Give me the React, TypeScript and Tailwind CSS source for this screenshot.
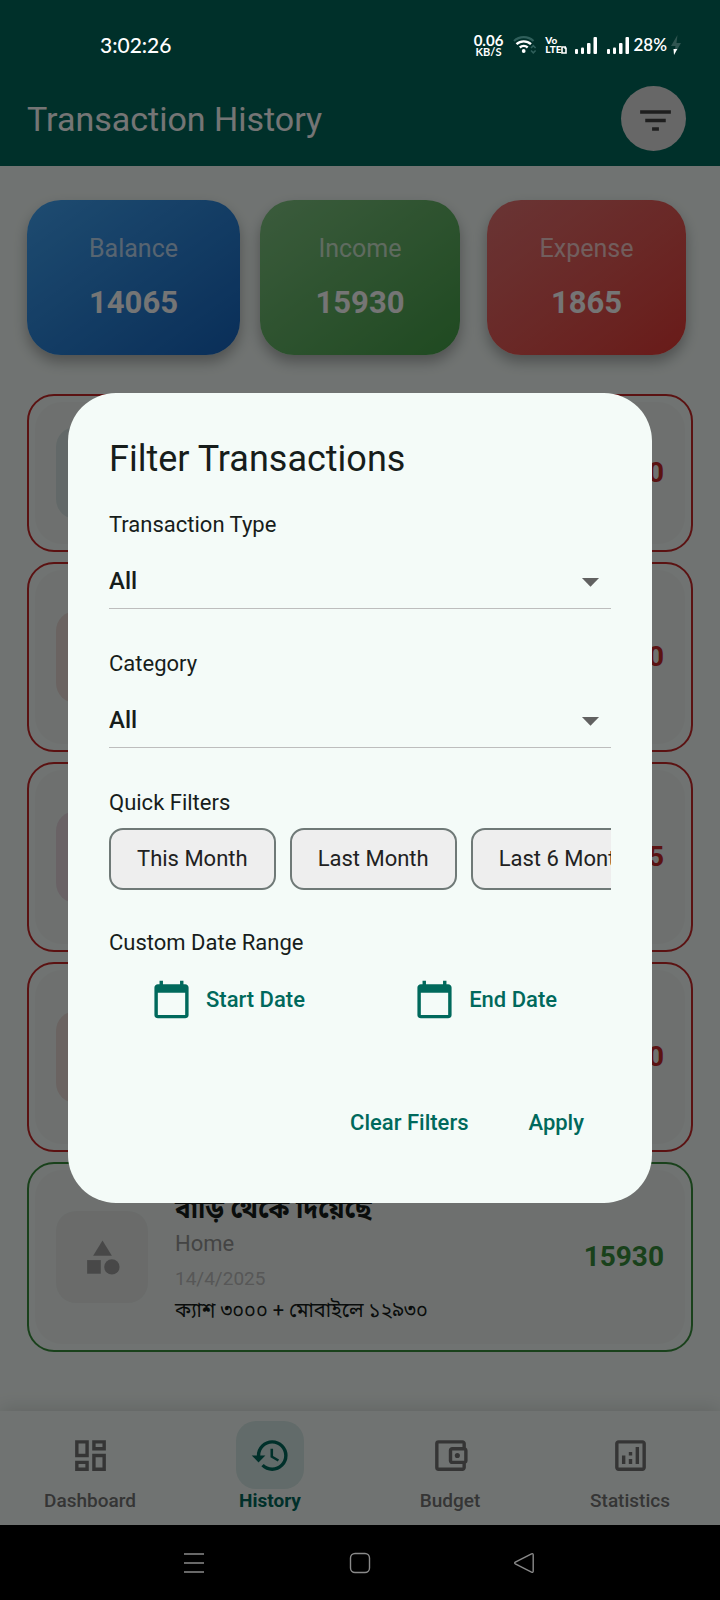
import React from "react";
import type { IconType } from "react-icons";
import {
  MdArrowDropDown,
  MdCalendarToday,
  MdCategory,
  MdFilterList,
  MdHistory,
  MdOutlineAccountBalanceWallet,
  MdOutlineAnalytics,
  MdOutlineDashboard,
} from "react-icons/md";

const summary = [
  { label: "Balance", value: "14065", box: "mr-5 flex-[213] from-[#42a5f5] to-[#1565c0]" },
  { label: "Income", value: "15930", box: "mr-[27px] flex-[200] from-[#81c784] to-[#43a047]" },
  { label: "Expense", value: "1865", box: "flex-[199] from-[#e57373] to-[#e53935]" },
];

type Entry = {
  id: number;
  title?: string;
  category?: string;
  date?: string;
  note?: string;
  amount: string;
  income?: boolean;
  tint: string;
  height: string;
};

const entries: Entry[] = [
  { id: 1, amount: "500", tint: "bg-[#d5e3e2]", height: "min-h-[158px]" },
  { id: 2, amount: "300", tint: "bg-[#e7d8d3]", height: "min-h-[190px]" },
  { id: 3, amount: "765", tint: "bg-[#e4d5dd]", height: "min-h-[190px]" },
  { id: 4, amount: "300", tint: "bg-[#e7d8d3]", height: "min-h-[190px]" },
  {
    id: 5,
    title: "বাড়ি থেকে দিয়েছে",
    category: "Home",
    date: "14/4/2025",
    note: "ক্যাশ ৩০০০ + মোবাইলে ১২৯৩০",
    amount: "15930",
    income: true,
    tint: "bg-[#e6eae8]",
    height: "min-h-[190px]",
  },
];

const tabs: { label: string; Icon: IconType; active?: boolean }[] = [
  { label: "Dashboard", Icon: MdOutlineDashboard },
  { label: "History", Icon: MdHistory, active: true },
  { label: "Budget", Icon: MdOutlineAccountBalanceWallet },
  { label: "Statistics", Icon: MdOutlineAnalytics },
];

function Signal() {
  return (
    <svg width="22" height="17" viewBox="0 0 22 17" fill="currentColor" aria-hidden="true">
      <rect x="0" y="12" width="3" height="5" rx="1" />
      <rect x="6" y="10.500" width="3" height="6.500" rx="1" />
      <rect x="12" y="6" width="3.500" height="11" rx="1" />
      <rect x="18.500" y="0" width="3.500" height="17" rx="1" />
    </svg>
  );
}

function StatusBar() {
  return (
    <div className="relative z-20 flex h-[70px] items-center pt-5 pr-[39px] pl-[100px] font-['Lato',sans-serif] text-white">
      <time className="text-[21px] leading-7 font-medium">3:02:26</time>
      <div className="ml-auto flex items-center">
        <div className="mr-[10px] flex flex-col items-center font-bold">
          <span className="text-[15px] leading-[13px]">0.06</span>
          <span className="text-[11px] leading-[9px]">KB/S</span>
        </div>
        <svg className="mr-2" width="24" height="18" viewBox="0 0 24 18" fill="none" aria-label="Wi-Fi">
          <path d="M1 5C6.500-.2 15-.2 20.500 5" stroke="#2f5f5b" strokeWidth="2.200" />
          <path d="M3.500 8.200C7.500 4.400 14 4.400 18 8.200" stroke="#fff" strokeWidth="2.400" />
          <path d="M6.800 11.500C9 9.500 12.500 9.500 14.700 11.500" stroke="#fff" strokeWidth="2.400" />
          <circle cx="10.700" cy="15" r="1.900" fill="#fff" />
          <path d="M18 12l2.300-2.300L22.600 12M18 14.500l2.300 2.300 2.300-2.300" stroke="#2f5f5b" strokeWidth="1.600" />
        </svg>
        <div className="mr-2 flex flex-col text-[10px] leading-[9px] font-black">
          <span>Vo</span>
          <span className="flex items-center">
            LTE
            <svg width="6" height="8" viewBox="0 0 6 8" fill="none" stroke="currentColor" strokeWidth="1.600" aria-hidden="true">
              <path d="M1 1h3.200v1.200h.8V7H1z" />
            </svg>
          </span>
        </div>
        <div className="mr-1 flex gap-[10px]">
          <Signal />
          <Signal />
        </div>
        <span className="text-[17px] leading-5 font-semibold">28%</span>
        <svg className="ml-1" width="10" height="20" viewBox="0 0 10 20" aria-label="Charging">
          <path d="M6.500 0 0 11h4.500L3 20l7-12H5.500z" fill="#2f5450" />
          <path d="M2.500 14h3.800L3 20z" fill="#fff" />
        </svg>
      </div>
    </div>
  );
}

function EntryCard({ title, category, date, note, amount, income, tint, height }: Entry) {
  return (
    <li
      className={`flex rounded-[27px] border-2 p-[6px] ${height} ${
        income ? "border-[#388e3c]" : "border-[#c62828]"
      }`}
    >
      <div className="flex flex-1 items-center rounded-[27px] bg-[#eff5f2] px-[21px]">
        <div className={`flex size-[92px] shrink-0 items-center justify-center rounded-[20px] ${tint}`}>
          <MdCategory className="size-[41px] text-[#9e9e9e]" />
        </div>
        <div className="ml-[27px] flex-1">
          {title && <p className="text-[26px] leading-[38px] font-bold text-[#171d1b]">{title}</p>}
          {category && <p className="text-[22px] leading-8 text-[#949494]">{category}</p>}
          {date && <p className="text-[19px] leading-[37px] text-[#bdbdbd]">{date}</p>}
          {note && <p className="text-[20px] leading-[27px] text-[#171d1b]">{note}</p>}
        </div>
        <p className={`text-[28px] leading-9 font-bold ${income ? "text-[#388e3c]" : "text-[#c62828]"}`}>{amount}</p>
      </div>
    </li>
  );
}

function Picker({ id, label, options }: { id: string; label: string; options: string[] }) {
  return (
    <div className="mb-[41px]">
      <label htmlFor={id} className="block text-[22px] leading-7">
        {label}
      </label>
      <div className="mt-4 grid items-center border-b border-[#bdbdbd]">
        <select
          id={id}
          className="col-start-1 row-start-1 h-[53px] w-full appearance-none bg-transparent text-[24px] font-medium"
        >
          {options.map((o) => (
            <option key={o}>{o}</option>
          ))}
        </select>
        <MdArrowDropDown className="pointer-events-none col-start-1 row-start-1 size-[41px] justify-self-end text-[#616161]" />
      </div>
    </div>
  );
}

function FilterDialog() {
  return (
    <div className="absolute inset-0 z-10 flex items-center bg-black/54 px-[68px] pt-[70px] pb-[75px]">
      <section
        role="dialog"
        aria-modal="true"
        aria-labelledby="filter-title"
        className="min-w-0 flex-1 rounded-[48px] bg-[#f4fbf8] px-[41px] pt-[41px] pb-[52px] text-[#171d1b]"
      >
        <h2 id="filter-title" className="mb-[26px] text-[36px] leading-[51px]">
          Filter Transactions
        </h2>
        <Picker id="type" label="Transaction Type" options={["All", "Income", "Expense"]} />
        <Picker id="category" label="Category" options={["All", "Home", "Food", "Travel"]} />
        <h3 className="text-[22px] leading-7">Quick Filters</h3>
        <div className="mt-[11px] flex gap-[14px] overflow-hidden">
          {["This Month", "Last Month", "Last 6 Months"].map((f) => (
            <button
              key={f}
              type="button"
              className="h-[62px] shrink-0 rounded-[14px] border-2 border-[#6f7977] bg-[#eeeeee] px-[26px] text-[22px] whitespace-nowrap text-[#212121]"
            >
              {f}
            </button>
          ))}
        </div>
        <h3 className="mt-[39px] text-[22px] leading-7">Custom Date Range</h3>
        <div className="mt-[22px] flex justify-between pr-[54px] pl-[42px] text-[22px] font-medium text-[#00695c]">
          {["Start Date", "End Date"].map((d) => (
            <button key={d} type="button" className="flex items-center gap-[14px]">
              <MdCalendarToday className="size-[41px]" />
              {d}
            </button>
          ))}
        </div>
        <div className="mt-[75px] flex justify-end gap-[6px] text-[22px] leading-7 font-medium text-[#00695c]">
          <button type="button" className="px-[27px] py-[14px]">
            Clear Filters
          </button>
          <button type="button" className="px-[27px] py-[14px]">
            Apply
          </button>
        </div>
      </section>
    </div>
  );
}

function SystemBar() {
  return (
    <div className="relative z-20 flex h-[75px] items-center justify-between bg-black px-[184px] text-[#8a8a8a]">
      <button type="button" aria-label="Recent apps">
        <svg width="22" height="22" viewBox="0 0 22 22" stroke="currentColor" strokeWidth="1.600" fill="none">
          <path d="M0 2h20M0 11h20M0 20h20" />
        </svg>
      </button>
      <button type="button" aria-label="Home">
        <svg width="22" height="22" viewBox="0 0 22 22" stroke="currentColor" strokeWidth="1.400" fill="none">
          <rect x="1.500" y="1.500" width="19" height="19" rx="4.500" />
        </svg>
      </button>
      <button type="button" aria-label="Back">
        <svg width="22" height="22" viewBox="0 0 22 22" stroke="currentColor" strokeWidth="1.400" fill="none">
          <path d="M17.500 1.800 1.300 10.200q-1.300.8 0 1.600l16.200 8.400q1.700.6 1.700-1.200V3q0-1.800-1.700-1.200z" />
        </svg>
      </button>
    </div>
  );
}

export default function App() {
  return (
    <div className="relative flex min-h-screen flex-col bg-[#f4fbf8] font-['Roboto','Noto_Sans_Bengali','Noto_Sans',sans-serif]">
      <header className="bg-[#00695c]">
        <StatusBar />
        <div className="flex h-24 items-center justify-between pr-[34px] pl-[27px]">
          <h1 className="pt-[2px] text-[34px] leading-10 text-white">Transaction History</h1>
          <button
            type="button"
            aria-label="Filter"
            className="flex size-[65px] items-center justify-center rounded-full bg-[#e0e0e0] pt-1 pl-1 text-[#424242]"
          >
            <MdFilterList className="size-[41px]" />
          </button>
        </div>
      </header>

      <main className="flex-1">
        <div className="flex pt-[34px] pr-[34px] pl-[27px]">
          {summary.map(({ label, value, box }) => (
            <div
              key={label}
              className={`flex h-[155px] flex-col items-center justify-center gap-[22px] rounded-[34px] bg-linear-to-br shadow-[0_7px_14px_rgba(0,0,0,0.3)] ${box}`}
            >
              <p className="text-[25px] leading-7 text-white/70">{label}</p>
              <p className="text-[31px] leading-9 font-bold text-white">{value}</p>
            </div>
          ))}
        </div>
        <ul className="flex flex-col gap-[10px] px-[27px] pt-[39px]">
          {entries.map((e) => (
            <EntryCard key={e.id} {...e} />
          ))}
        </ul>
      </main>

      <nav className="flex h-[114px] bg-[#f4fbf8] shadow-[0_-3px_17px_rgba(0,0,0,0.12)]">
        {tabs.map(({ label, Icon, active }) => (
          <a
            key={label}
            href={`#${label.toLowerCase()}`}
            aria-current={active ? "page" : undefined}
            className={`flex flex-1 flex-col items-center pt-[10px] text-[19px] leading-6 ${
              active ? "font-bold text-[#00695c]" : "font-medium text-[#757575]"
            }`}
          >
            <span
              className={`flex size-[68px] items-center justify-center rounded-[20px] ${
                active ? "bg-[#d5e9e6]" : ""
              }`}
            >
              <Icon className="size-[41px]" />
            </span>
            {label}
          </a>
        ))}
      </nav>
      <SystemBar />
      <FilterDialog />
    </div>
  );
}
